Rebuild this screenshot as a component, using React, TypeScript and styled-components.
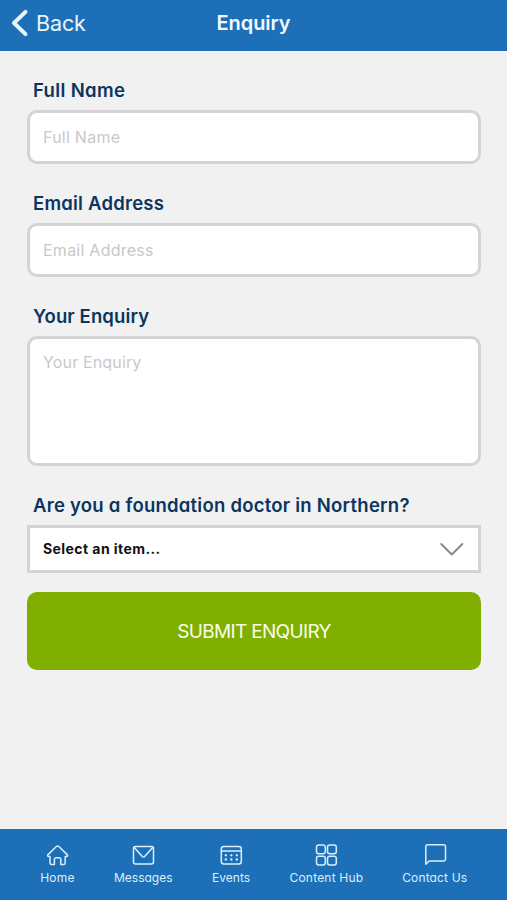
import React from "react";
import styled, { createGlobalStyle } from "styled-components";

const GlobalStyle = createGlobalStyle`
  * { box-sizing: border-box; }
  body { margin: 0; background: #f1f1f1; }
  button, input, textarea { font: inherit; margin: 0; }
`;

const Screen = styled.div`
  width: 100%;
  height: 900px;
  display: flex;
  flex-direction: column;
  background: #f1f1f1;
  font-family: Inter, "Liberation Sans", sans-serif;
  overflow: hidden;
`;

const Header = styled.header`
  flex: none;
  height: 51px;
  display: grid;
  grid-template-columns: 1fr auto 1fr;
  align-items: center;
  padding: 0 11px 5px;
  background: #1d70b7;
  color: #fff;
`;

const BackButton = styled.button`
  display: flex;
  align-items: center;
  gap: 7px;
  padding: 0;
  border: 0;
  background: none;
  color: #e9f4fd;
  font-size: 21.5px;
  line-height: 28px;
  letter-spacing: -0.1px;
`;

const Title = styled.h1`
  margin: 0;
  font-size: 20px;
  font-weight: 600;
  line-height: 28px;
  letter-spacing: -0.05px;
  color: #f3f9fe;
`;

const Form = styled.form`
  flex: 1;
  display: flex;
  flex-direction: column;
  padding: 25px 26px 0 27px;
`;

const Field = styled.div<{ $gap: number }>`
  display: flex;
  flex-direction: column;
  margin-bottom: ${(p) => p.$gap}px;
`;

const Label = styled.label<{ $tracking: number }>`
  height: 34px;
  padding-left: 6px;
  font-size: 18.5px;
  font-weight: 600;
  line-height: 28px;
  letter-spacing: ${(p) => p.$tracking}px;
  font-feature-settings: "cv11";
  color: #0b3560;
  white-space: nowrap;
`;

const Input = styled.input`
  width: 100%;
  height: 54px;
  padding: 0 13px;
  border: 3px solid #d4d4d4;
  border-radius: 10px;
  background: #fff;
  font-size: 16px;
  letter-spacing: 0.25px;
  outline: none;
  &::placeholder { color: #c8c8ca; opacity: 1; }
`;

const TextArea = styled.textarea`
  display: block;
  width: 100%;
  height: 130px;
  padding: 13px;
  border: 3px solid #d4d4d4;
  border-radius: 10px;
  background: #fff;
  font-size: 16px;
  line-height: 20px;
  letter-spacing: 0.15px;
  resize: none;
  outline: none;
  &::placeholder { color: #c8c8ca; opacity: 1; }
`;

const Select = styled.button`
  display: flex;
  align-items: center;
  justify-content: space-between;
  width: 100%;
  height: 48px;
  padding: 0 14px 1px 13px;
  border: 3px solid #d4d4d4;
  background: #fff;
  color: #111;
  font-size: 14px;
  font-weight: 700;
  letter-spacing: 0.43px;
`;

const Submit = styled.button`
  height: 78px;
  border: 0;
  border-radius: 10px;
  background: #80af00;
  color: #f8fdea;
  font-size: 19px;
  letter-spacing: -0.67px;
`;

const TabBar = styled.nav`
  flex: none;
  height: 71px;
  display: grid;
  grid-template-columns: 35px 59px 39px 74px 65px;
  column-gap: 38.8px;
  padding: 14px 0 0 40px;
  background: #1d70b7;
`;

const Tab = styled.a<{ $tracking: number }>`
  display: flex;
  flex-direction: column;
  align-items: center;
  gap: 3px;
  color: #dceefc;
  font-size: 12px;
  line-height: 16px;
  letter-spacing: ${(p) => p.$tracking}px;
  font-feature-settings: "cv11";
  white-space: nowrap;
`;

const Icon = styled.svg`
  display: block;
  flex: none;
  fill: none;
  stroke: currentColor;
  stroke-linecap: round;
  stroke-linejoin: round;
`;

const icons = {
  home: <path d="M2 11.600 10.400 3.500c.8-.7 1.600-.7 2.400 0l8.400 8.100c.8.900.4 1.900-.8 1.900h-1.200v6.600c0 .9-.5 1.400-1.400 1.400h-3v-5c0-1.200-.6-1.800-1.800-1.800h-2.800c-1.200 0-1.800.6-1.800 1.800v5h-3c-.9 0-1.400-.5-1.400-1.400v-6.600H2.800c-1.200 0-1.600-1-.8-1.900Z" />,
  mail: <><rect x="2.500" y="3.500" width="20" height="17.500" rx="2" /><path d="m3.100 4.200 8.200 9.300c.8.800 1.500.8 2.300 0L21.900 4.200" /></>,
  calendar: <><rect x="2.300" y="3.500" width="20" height="17.500" rx="2.500" /><path d="M2.300 8h20" /><path d="M6.800 12.300h.1m5.400 0h.1m5.400 0h.1M6.800 16.500h.1m5.400 0h.1m5.400 0h.1" strokeWidth="2.300" /></>,
  grid: <><rect x="2.500" y="2" width="8.800" height="8.800" rx="2.200" /><rect x="13.500" y="2" width="8.800" height="8.800" rx="2.200" /><rect x="2.500" y="13.200" width="8.800" height="8.800" rx="2.200" /><rect x="13.500" y="13.200" width="8.800" height="8.800" rx="2.200" /></>,
  chat: <path d="M2.800 21.300V3.500c0-1 .7-1.700 1.700-1.700h16.300c1 0 1.700.7 1.700 1.700v12.800c0 1-.7 1.700-1.700 1.700H6.100Z" />,
};

const tabs: { label: string; icon: keyof typeof icons; tracking: number }[] = [
  { label: "Home", icon: "home", tracking: 0.25 },
  { label: "Messages", icon: "mail", tracking: 0 },
  { label: "Events", icon: "calendar", tracking: 0 },
  { label: "Content Hub", icon: "grid", tracking: 0.2 },
  { label: "Contact Us", icon: "chat", tracking: 0.15 },
];

export default function App() {
  return (
    <Screen>
      <GlobalStyle />
      <Header>
        <BackButton type="button">
          <Icon width="18" height="28" viewBox="0 0 18 28" strokeWidth="4">
            <path d="M14.500 2.900 3 14 14.500 25.100" />
          </Icon>
          Back
        </BackButton>
        <Title>Enquiry</Title>
      </Header>
      <Form onSubmit={(e) => e.preventDefault()}>
        <Field $gap={25}>
          <Label htmlFor="name" $tracking={0.35}>Full Name</Label>
          <Input id="name" placeholder="Full Name" />
        </Field>
        <Field $gap={25}>
          <Label htmlFor="email" $tracking={0.22}>Email Address</Label>
          <Input id="email" placeholder="Email Address" />
        </Field>
        <Field $gap={25}>
          <Label htmlFor="enquiry" $tracking={0.12}>Your Enquiry</Label>
          <TextArea id="enquiry" placeholder="Your Enquiry" />
        </Field>
        <Field $gap={19}>
          <Label htmlFor="doctor" $tracking={0.24}>Are you a foundation doctor in Northern?</Label>
          <Select id="doctor" type="button">
            Select an item...
            <Icon width="24" height="14" viewBox="0 0 24 14" strokeWidth="1.8" color="#858588">
              <path d="m1.200 2 10.600 10.500L22.400 2" />
            </Icon>
          </Select>
        </Field>
        <Submit type="submit">SUBMIT ENQUIRY</Submit>
      </Form>
      <TabBar>
        {tabs.map((t) => (
          <Tab key={t.label} $tracking={t.tracking}>
            <Icon width="24" height="24" viewBox="0 0 24 24" strokeWidth="1.500">{icons[t.icon]}</Icon>
            {t.label}
          </Tab>
        ))}
      </TabBar>
    </Screen>
  );
}
